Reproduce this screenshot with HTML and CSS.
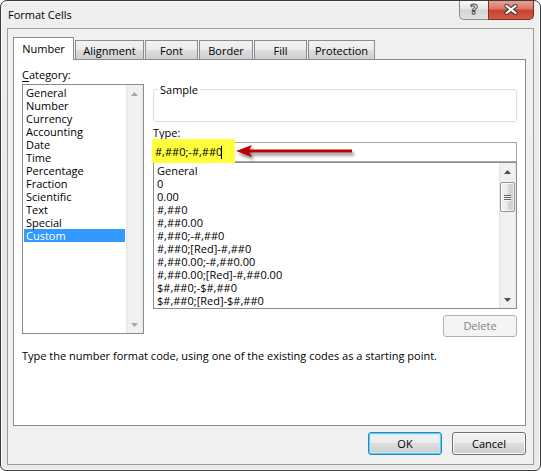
FILE: index.html
```html
<!DOCTYPE html>
<html>
<head>
<meta charset="utf-8">
<title>Format Cells</title>
<link rel="stylesheet" href="styles.css">
</head>
<body>
<div class="window">
  <div class="titlebar">
    <span class="title">Format Cells</span>
    <div class="caption-buttons">
      <div class="cap-btn help"><span class="help-glyph">?</span></div>
      <div class="cap-btn close">
        <svg width="14" height="11" viewBox="0 0 14 11"><path d="M2.5,2 L11.5,9 M11.5,2 L2.5,9" stroke="#3a3a3a" stroke-width="4.2" stroke-linecap="round"/><path d="M2.5,2 L11.5,9 M11.5,2 L2.5,9" stroke="#ffffff" stroke-width="2.2" stroke-linecap="round"/></svg>
      </div>
    </div>
  </div>
  <div class="client">
    <div class="tabs">
      <div class="tab active w-number">Number</div>
      <div class="tab w-alignment">Alignment</div>
      <div class="tab w-font">Font</div>
      <div class="tab w-border">Border</div>
      <div class="tab w-fill">Fill</div>
      <div class="tab w-protection">Protection</div>
    </div>
    <div class="panel">
      <div class="columns">
        <div class="col-left">
          <div class="label"><u>C</u>ategory:</div>
          <div class="listbox cat-list">
            <ul class="items">
              <li>General</li>
              <li>Number</li>
              <li>Currency</li>
              <li>Accounting</li>
              <li>Date</li>
              <li>Time</li>
              <li>Percentage</li>
              <li>Fraction</li>
              <li>Scientific</li>
              <li>Text</li>
              <li>Special</li>
              <li class="selected">Custom</li>
            </ul>
            <div class="vscroll disabled">
              <div class="sb-btn"><svg width="7" height="4" viewBox="0 0 7 4"><path d="M0,4 L3.5,0 L7,4 Z"/></svg></div>
              <div class="sb-track"></div>
              <div class="sb-btn"><svg width="7" height="4" viewBox="0 0 7 4"><path d="M0,0 L7,0 L3.5,4 Z"/></svg></div>
            </div>
          </div>
        </div>
        <div class="col-right">
          <fieldset class="sample"><legend>Sample</legend><div class="sample-body"></div></fieldset>
          <div class="label type-label"><u>T</u>ype:</div>
          <div class="type-wrap">
            <div class="type-input"><span class="type-text">#,##0;-#,##0</span><span class="caret"></span></div>
            <div class="highlight"></div>
            <svg class="red-arrow" width="126" height="20" viewBox="0 0 126 20"><path d="M1,9 L17,3 L14.5,7.5 L117,7.5 L117,10.5 L14.5,10.5 L17,15 Z" fill="#c00000"/></svg>
          </div>
          <div class="listbox fmt-list">
            <ul class="items">
              <li>General</li>
              <li>0</li>
              <li>0.00</li>
              <li>#,##0</li>
              <li>#,##0.00</li>
              <li>#,##0;-#,##0</li>
              <li>#,##0;[Red]-#,##0</li>
              <li>#,##0.00;-#,##0.00</li>
              <li>#,##0.00;[Red]-#,##0.00</li>
              <li>$#,##0;-$#,##0</li>
              <li>$#,##0;[Red]-$#,##0</li>
            </ul>
            <div class="vscroll">
              <div class="sb-btn"><svg width="7" height="4" viewBox="0 0 7 4"><path d="M0,4 L3.5,0 L7,4 Z"/></svg></div>
              <div class="sb-track">
                <div class="sb-thumb"><span></span><span></span><span></span></div>
              </div>
              <div class="sb-btn"><svg width="7" height="4" viewBox="0 0 7 4"><path d="M0,0 L7,0 L3.5,4 Z"/></svg></div>
            </div>
          </div>
          <div class="delete-row"><div class="btn disabled">Delete</div></div>
        </div>
      </div>
      <p class="desc">Type the number format code, using one of the existing codes as a starting point.</p>
    </div>
    <div class="footer">
      <div class="btn default">OK</div>
      <div class="btn">Cancel</div>
    </div>
  </div>
</div>
</body>
</html>
```

FILE: styles.css
```css
* { box-sizing: border-box; }
html, body { margin: 0; padding: 0; background: #ffffff; }
body {
  font-family: "Open Sans", "Segoe UI", sans-serif;
  font-size: 11px;
  color: #000;
}
ul { margin: 0; padding: 0; list-style: none; }
p { margin: 0; }

.window {
  width: 541px;
  height: 471px;
  border: 1px solid #3a3a3a;
  border-radius: 7px 7px 6px 6px;
  background: linear-gradient(#efefef, #e7e7e7 60%, #e9e9e9);
  box-shadow: inset 0 0 0 1px rgba(255,255,255,0.8);
  display: flex;
  flex-direction: column;
  overflow: hidden;
}

.titlebar {
  height: 27px;
  flex: none;
  display: flex;
  justify-content: space-between;
  align-items: flex-start;
  padding-left: 7px;
}
.title { margin-top: 6px; line-height: 15px; color: #000; }

.caption-buttons { display: flex; margin-top: -1px; margin-right: 6px; }
.cap-btn {
  height: 20px;
  display: flex;
  align-items: center;
  justify-content: center;
  border: 1px solid #8a8a8a;
  border-top: none;
}
.help {
  width: 29px;
  border-right: none;
  border-radius: 0 0 0 5px;
  background: linear-gradient(#fbfbfb, #e6e6e6 45%, #d4d4d4 55%, #e2e2e2);
}
.help-glyph {
  font-family: "DejaVu Sans", sans-serif;
  font-weight: bold;
  font-size: 14px;
  line-height: 14px;
  color: #f6f6f6;
  -webkit-text-stroke: 1px #555;
  margin-top: -1px;
}
.close {
  width: 46px;
  border-color: #7c3127;
  border-radius: 0 0 5px 0;
  background: linear-gradient(#e9a79c, #db7767 45%, #c9432f 55%, #d45a45);
}

.client {
  flex: 1;
  margin: 0 6px 5px 6px;
  border: 1px solid #9c9c9c;
  background: #f0f0f0;
  display: flex;
  flex-direction: column;
  padding: 8px 7px 0 5px;
}

.tabs {
  display: flex;
  align-items: flex-end;
  gap: 1px;
  height: 22px;
  flex: none;
}
.tab {
  height: 19px;
  border: 1px solid #898c95;
  border-bottom: none;
  background: linear-gradient(#f3f3f3, #ebebeb 50%, #dddddd 50%, #cfcfcf);
  display: flex;
  align-items: center;
  justify-content: center;
  padding-top: 1px;
}
.tab.active {
  height: 23px;
  margin-bottom: -1px;
  background: #ffffff;
  position: relative;
  z-index: 1;
  padding-top: 0;
  padding-bottom: 2px;
}
.w-number { width: 61px; }
.w-alignment { width: 69px; }
.w-font { width: 53px; }
.w-border { width: 54px; }
.w-fill { width: 53px; }
.w-protection { width: 67px; }

.panel {
  height: 367px;
  flex: none;
  width: 513px;
  border: 1px solid #898c95;
  background: #ffffff;
}

.columns {
  display: flex;
  gap: 9px;
  padding: 0 6px 0 8px;
}
.col-left { width: 122px; padding-top: 7px; }
.col-right { width: 364px; padding-top: 22px; }

.label { line-height: 16px; }
.label u { text-decoration-thickness: 1px; text-underline-offset: 2px; }

.listbox {
  border: 1px solid #898c95;
  background: #fff;
  display: flex;
  overflow: hidden;
}
.items { flex: 1; overflow: hidden; }
.items li { line-height: 13px; height: 13px; white-space: nowrap; }

.cat-list { height: 250px; margin-top: 1px; }
.cat-list .items { padding-top: 1px; }
.cat-list .items li { margin: 0 1px; padding-left: 2px; }
.cat-list .items li.selected { background: #3399ff; color: #fff; }

.fmt-list { height: 147px; }
.fmt-list .items { padding-top: 1px; }
.fmt-list .items li { padding-left: 3px; }

.vscroll {
  width: 17px;
  flex: none;
  display: flex;
  flex-direction: column;
  background: linear-gradient(90deg, #e5e5e5, #f1f1f1 15%, #f1f1f1 85%, #e9e9e9);
}
.sb-btn {
  height: 17px;
  flex: none;
  display: flex;
  align-items: center;
  justify-content: center;
}
.sb-btn svg path { fill: #4e4e4e; }
.vscroll.disabled .sb-btn svg path { fill: #a6a6a6; }
.sb-track { flex: 1; padding: 2px 1px 0 1px; }
.sb-thumb {
  height: 30px;
  border: 1px solid #959595;
  border-radius: 2px;
  background: linear-gradient(90deg, #f4f4f4, #e8e8e8 50%, #d6d6d6 51%, #cfcfcf);
  box-shadow: inset 0 0 0 1px rgba(255,255,255,0.7);
  display: flex;
  flex-direction: column;
  align-items: center;
  justify-content: center;
  gap: 1px;
}
.sb-thumb span { width: 7px; height: 1px; background: #636363; box-shadow: 0 1px 0 #f5f5f5; }

.sample {
  margin: 0;
  padding: 0;
  border: 1px solid #d5dfe5;
  border-radius: 3px;
}
.sample legend {
  margin-left: 4px;
  padding: 0 2px;
  line-height: 15px;
}
.sample-body { height: 24px; }

.type-label { margin-top: 3px; }

.type-wrap { position: relative; margin-top: 1px; }
.type-input {
  height: 20px;
  border: 1px solid #a4a7ad;
  background: #fff;
  display: flex;
  align-items: center;
  padding-left: 1px;
}
.type-text { position: relative; z-index: 2; line-height: 14px; }
.caret {
  position: relative;
  z-index: 2;
  width: 1px;
  height: 13px;
  background: #000;
  margin-left: -1px;
}
.highlight {
  position: absolute;
  left: -1px;
  top: -3px;
  width: 83px;
  height: 24px;
  background: #ffff3c;
  z-index: 1;
}
.red-arrow {
  position: absolute;
  left: 82px;
  top: 0;
  z-index: 3;
  filter: drop-shadow(2px 3px 1.5px rgba(0,0,0,0.45));
}

.delete-row { display: flex; justify-content: flex-end; margin-top: 6px; }

.btn {
  width: 74px;
  height: 23px;
  border: 1px solid #707070;
  border-radius: 3px;
  background: linear-gradient(#f2f2f2, #ebebeb 50%, #dddddd 50%, #cfcfcf);
  box-shadow: inset 0 0 0 1px #fbfbfb;
  display: flex;
  align-items: center;
  justify-content: center;
  padding-bottom: 1px;
}
.btn.disabled {
  height: 22px;
  border-color: #adb2b5;
  background: #f4f4f4;
  box-shadow: none;
  color: #838383;
}
.btn.default {
  border-color: #3c7fb1;
  box-shadow: inset 0 0 0 1px #48d8fb, inset 0 0 0 2px rgba(190,235,255,0.6);
}

.desc { margin-top: 11px; padding-left: 8px; line-height: 15px; }

.footer {
  display: flex;
  justify-content: flex-end;
  gap: 10px;
  margin-top: 6px;
}
```
